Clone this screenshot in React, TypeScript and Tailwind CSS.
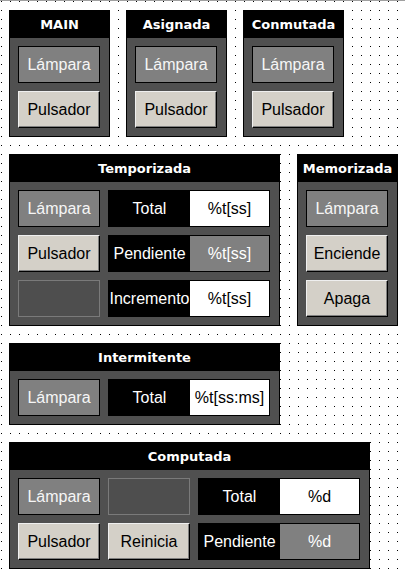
import type { ReactNode } from "react";

const SANS = "font-['Liberation_Sans',Arial,sans-serif]";

function Panel({ title, children }: { title: string; children: ReactNode }) {
  return (
    <div className="border border-black bg-[#505050] flex flex-col">
      {/* Header */}
      <div className="h-[27px] bg-black text-white text-[13px] font-bold flex items-center justify-center font-['DejaVu_Sans',sans-serif] whitespace-nowrap">
        {title}
      </div>
      <div className="pt-2 pl-2 pr-[9px] pb-2">{children}</div>
    </div>
  );
}

function Lamp() {
  return (
    <div className="w-[82px] h-[37px] border border-black bg-[#808080] text-[#f6f6f6] text-[16px] flex items-center justify-center">
      Lámpara
    </div>
  );
}

function Button({ label }: { label: string }) {
  return (
    <div className="w-[82px] h-[37px] bg-[#d4d0c8] text-black text-[16px] flex items-center justify-center border border-t-[#efefef] border-l-[#efefef] border-r-black border-b-black shadow-[inset_-1px_-1px_#808080]">
      {label}
    </div>
  );
}

function Empty() {
  return <div className="w-[82px] h-[37px] border border-[#7a7a7a] bg-[#4e4e4e]" />;
}

function Field({
  label,
  value,
  dim,
}: {
  label: string;
  value: string;
  dim?: boolean;
}) {
  return (
    <div className="w-[162px] h-[37px] border border-black bg-black flex text-[16px]">
      <div className="w-[81px] text-white flex items-center justify-center whitespace-nowrap">
        {label}
      </div>
      <div
        className={
          dim
            ? "flex-1 bg-[#808080] text-white flex items-center justify-center"
            : "flex-1 bg-white text-black flex items-center justify-center"
        }
      >
        {value}
      </div>
    </div>
  );
}

export default function App() {
  return (
    <div
      className={`${SANS} min-h-[577px] w-full bg-white bg-[image:conic-gradient(at_1px_1px,transparent_75%,#000_0)] bg-[length:9px_9px] bg-[position:1px_1px] shadow-[inset_0_1px_#a0a0a0] pt-[10px] pl-[9px] flex flex-col items-start gap-[17px]`}
    >
      {/* Row 1 */}
      <div className="flex items-start gap-4">
        <Panel title="MAIN">
          <div className="flex flex-col gap-2">
            <Lamp />
            <Button label="Pulsador" />
          </div>
        </Panel>
        <Panel title="Asignada">
          <div className="flex flex-col gap-2">
            <Lamp />
            <Button label="Pulsador" />
          </div>
        </Panel>
        <Panel title="Conmutada">
          <div className="flex flex-col gap-2">
            <Lamp />
            <Button label="Pulsador" />
          </div>
        </Panel>
      </div>

      {/* Row 2 */}
      <div className="flex items-start gap-[17px]">
        <Panel title="Temporizada">
          <div className="grid grid-cols-[82px_162px] gap-2">
            <Lamp />
            <Field label="Total" value="%t[ss]" />
            <Button label="Pulsador" />
            <Field label="Pendiente" value="%t[ss]" dim />
            <Empty />
            <Field label="Incremento" value="%t[ss]" />
          </div>
        </Panel>
        <Panel title="Memorizada">
          <div className="flex flex-col gap-2">
            <Lamp />
            <Button label="Enciende" />
            <Button label="Apaga" />
          </div>
        </Panel>
      </div>

      {/* Row 3 */}
      <Panel title="Intermitente">
        <div className="grid grid-cols-[82px_162px] gap-2">
          <Lamp />
          <Field label="Total" value="%t[ss:ms]" />
        </div>
      </Panel>

      {/* Row 4 */}
      <Panel title="Computada">
        <div className="grid grid-cols-[82px_82px_162px] gap-2">
          <Lamp />
          <Empty />
          <Field label="Total" value="%d" />
          <Button label="Pulsador" />
          <Button label="Reinicia" />
          <Field label="Pendiente" value="%d" dim />
        </div>
      </Panel>
    </div>
  );
}
